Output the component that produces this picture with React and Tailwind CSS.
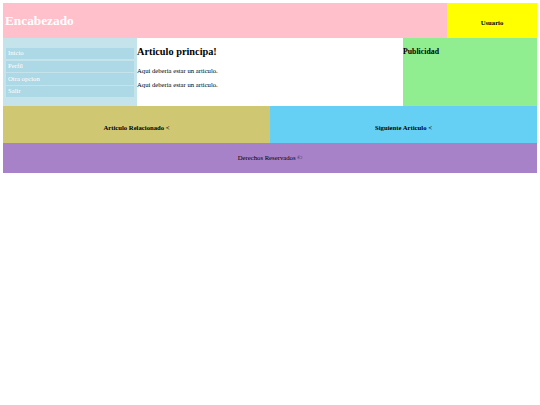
export default function App() {
  const serif = { fontFamily: '"Liberation Serif", "Times New Roman", serif' };
  const items = ["Inicio", "Perfil", "Otra opcion", "Salir"];
  return (
    <div className="w-[540px] h-[405px] bg-white pt-[3px] px-[3px]" style={serif}>
      <div className="w-[534px] flex flex-col">
        <div className="flex h-[35px]">
          <div className="w-[444px] bg-[#ffc0cb] flex items-center pl-[2px]">
            <h1 className="text-[13.3px] font-bold text-white leading-none">Encabezado</h1>
          </div>
          <div className="w-[90px] bg-[#ffff00] flex items-center justify-center pt-[5px]">
            <span className="text-[6.7px] font-bold text-black">Usuario</span>
          </div>
        </div>
        <div className="flex h-[68px]">
          <div className="w-[134px] bg-[#c5e3eb] pt-[10px] px-[3px] flex flex-col gap-[1.3px]">
            {items.map((t) => (
              <div key={t} className="h-[11.4px] bg-[#add8e6] flex items-center pl-[2px] text-[6.7px] text-white leading-none">
                {t}
              </div>
            ))}
          </div>
          <div className="w-[266px] bg-white pt-[8.3px]">
            <h2 className="text-[10.3px] font-bold leading-[11.5px] text-black">Articulo principa!</h2>
            <p className="text-[6.67px] leading-[7.7px] mt-[9.4px] text-black">Aqui deberia estar un articulo.</p>
            <p className="text-[6.67px] leading-[7.7px] mt-[6.4px] text-black">Aqui deberia estar un articulo.</p>
          </div>
          <div className="w-[134px] bg-[#90ee90] pt-[9.2px]">
            <h3 className="text-[7.8px] font-bold leading-[9px] text-black">Publicidad</h3>
          </div>
        </div>
        <div className="flex h-[37px]">
          <div className="w-[267px] bg-[#d0c772] flex items-center justify-center pt-[7px]">
            <span className="text-[6.7px] font-bold text-black">Articulo Relacionado &lt;</span>
          </div>
          <div className="w-[267px] bg-[#66d0f4] flex items-center justify-center pt-[7px]">
            <span className="text-[6.7px] font-bold text-black">Siguiente Articulo &lt;</span>
          </div>
        </div>
        <div className="h-[30px] bg-[#a882c8] flex items-center justify-center">
          <span className="text-[6.7px] text-black">Derechos Reservados ©</span>
        </div>
      </div>
    </div>
  );
}
